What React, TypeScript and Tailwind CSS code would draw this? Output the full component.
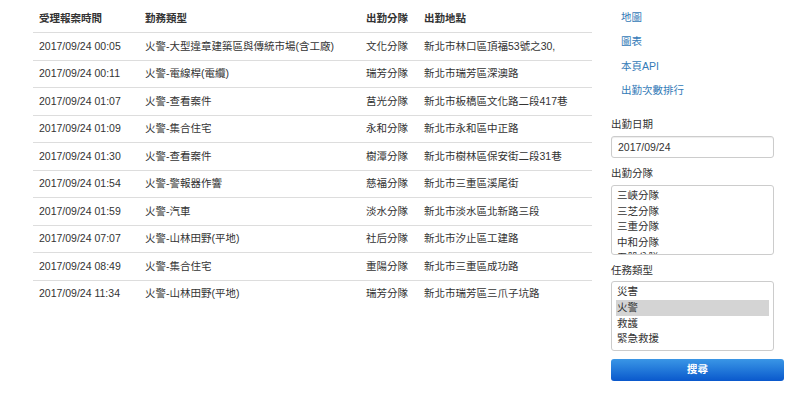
const rows = [
  ['2017/09/24 00:05', '火警-大型違章建築區與傳統市場(含工廠)', '文化分隊', '新北市林口區頂福53號之30,'],
  ['2017/09/24 00:11', '火警-電線桿(電纜)', '瑞芳分隊', '新北市瑞芳區深澳路'],
  ['2017/09/24 01:07', '火警-查看案件', '莒光分隊', '新北市板橋區文化路二段417巷'],
  ['2017/09/24 01:09', '火警-集合住宅', '永和分隊', '新北市永和區中正路'],
  ['2017/09/24 01:30', '火警-查看案件', '樹潭分隊', '新北市樹林區保安街二段31巷'],
  ['2017/09/24 01:54', '火警-警報器作響', '慈福分隊', '新北市三重區溪尾街'],
  ['2017/09/24 01:59', '火警-汽車', '淡水分隊', '新北市淡水區北新路三段'],
  ['2017/09/24 07:07', '火警-山林田野(平地)', '社后分隊', '新北市汐止區工建路'],
  ['2017/09/24 08:49', '火警-集合住宅', '重陽分隊', '新北市三重區成功路'],
  ['2017/09/24 11:34', '火警-山林田野(平地)', '瑞芳分隊', '新北市瑞芳區三爪子坑路'],
];

const links = ['地圖', '圖表', '本頁API', '出勤次數排行'];
const stations = ['三峽分隊', '三芝分隊', '三重分隊', '中和分隊', '五股分隊'];
const types = ['災害', '火警', '救護', '緊急救援'];

const font = { fontFamily: '"Liberation Sans", "Noto Sans CJK TC", sans-serif' };

export default function App() {
  return (
    <div className="w-[800px] h-[396px] bg-white text-[#333] text-[10.5px] leading-[15.3px] flex pl-[33px] pt-[5px] overflow-hidden" style={font}>
      <table className="w-[559px] h-fit border-collapse table-fixed">
        <colgroup>
          <col className="w-[106px]" />
          <col className="w-[221px]" />
          <col className="w-[58px]" />
          <col className="w-[174px]" />
        </colgroup>
        <thead>
          <tr className="border-b-[1.5px] border-[#ddd]">
            <th className="text-left font-semibold px-[6px] py-[6px] whitespace-nowrap">受理報案時間</th>
            <th className="text-left font-semibold px-[6px] py-[6px]">勤務類型</th>
            <th className="text-left font-semibold px-[6px] py-[6px] whitespace-nowrap">出勤分隊</th>
            <th className="text-left font-semibold px-[6px] py-[6px]">出勤地點</th>
          </tr>
        </thead>
        <tbody>
          {rows.map((r, i) => (
            <tr key={i} className={i === 0 ? '' : 'border-t border-[#ddd]'}>
              {r.map((c, j) => (
                <td key={j} className="px-[6px] py-[5.6px] whitespace-nowrap">{c}</td>
              ))}
            </tr>
          ))}
        </tbody>
      </table>

      <div className="ml-[19px] w-[173px] flex flex-col">
        <ul className="flex flex-col">
          {links.map((l) => (
            <li key={l} className="h-[24.5px] flex items-center pl-[10px] text-[#337ab7]">{l}</li>
          ))}
        </ul>

        <div className="mt-[14px] mb-[4px]">出勤日期</div>
        <div className="w-[163px] h-[22px] border border-[#ccc] rounded-[3px] flex items-center px-[6px] shadow-[inset_0_1px_1px_rgba(0,0,0,0.075)]">
          2017/09/24
        </div>

        <div className="mt-[8px] mb-[3px]">出勤分隊</div>
        <div className="w-[163px] h-[70px] border border-[#ccc] rounded-[3px] overflow-hidden pt-[2.5px] px-[5px]">
          {stations.map((s) => (
            <div key={s} className="h-[15.6px] leading-[15.6px]">{s}</div>
          ))}
        </div>

        <div className="mt-[8px] mb-[3px]">任務類型</div>
        <div className="w-[163px] h-[70px] border border-[#ccc] rounded-[3px] overflow-hidden pt-[2.5px] px-[4px]">
          {types.map((t) => (
            <div key={t} className={`h-[15.6px] leading-[15.6px] px-[1px] ${t === '火警' ? 'bg-[#d4d4d4]' : ''}`}>{t}</div>
          ))}
        </div>

        <button className="mt-[8px] w-[173px] h-[22px] rounded-[3px] bg-gradient-to-b from-[#3a96e6] to-[#0a58cc] text-white font-semibold flex items-center justify-center">
          搜尋
        </button>
      </div>
    </div>
  );
}
